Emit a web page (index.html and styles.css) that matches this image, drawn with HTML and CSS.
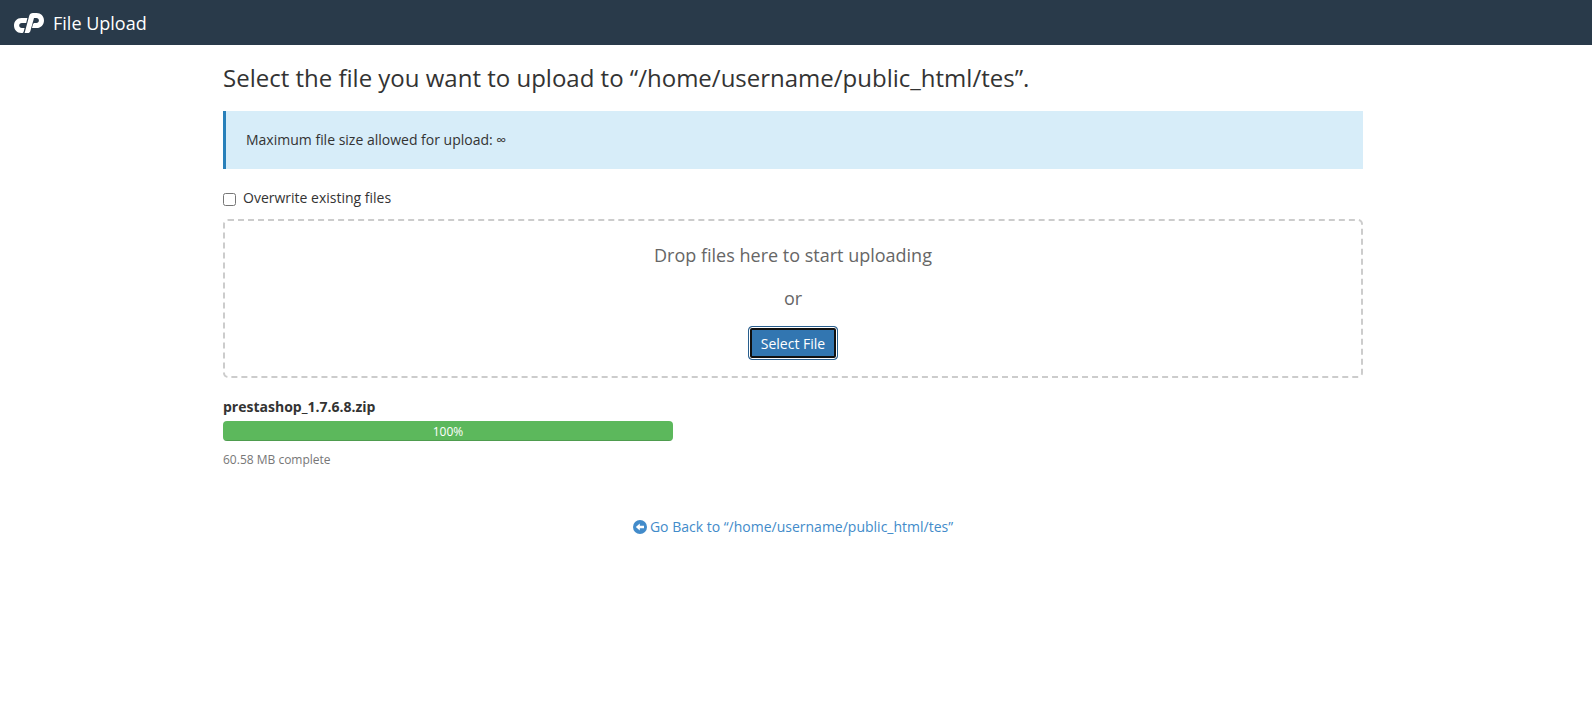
FILE: index.html
```html
<!DOCTYPE html>
<html lang="en">
<head>
    <meta charset="UTF-8">
    <meta name="viewport" content="width=device-width, initial-scale=1.0">
    <title>File Upload</title>
    <link rel="stylesheet" href="styles.css">
</head>
<body>
    <header class="navbar">
        <svg class="logo" viewBox="0 0 30 20" width="30" height="20" aria-hidden="true">
            <path d="M7.4 5H13.4L12.2 10H7.8C6.200 10 5.200 11.100 5.200 12.500C5.200 14 6.300 15 7.800 15H9L10.600 15L9.700 18.400C9.400 19.400 8.800 20 7.800 20H7.200C3 20 0 16.600 0 12.500C0 8.400 3 5 7.400 5Z"/>
            <path d="M10.600 20L15.100 3.200C15.600 1.200 17 0 19 0H22.600C26.800 0 30 3.200 30 7.400C30 11.700 26.800 15 22.600 15H18L18.800 11.800C19.100 10.600 19.800 10 20.800 10H22.400C23.900 10 24.900 8.900 24.900 7.500C24.900 6 23.900 5 22.400 5H20L16.300 18.200C15.900 19.400 15 20 13.900 20Z"/>
        </svg>
        <span class="navbar-title">File Upload</span>
    </header>
    <main class="container">
        <h1>Select the file you want to upload to “/home/username/public_html/tes”.</h1>

        <div class="callout">Maximum file size allowed for upload: ∞</div>

        <div class="overwrite">
            <input type="checkbox" id="overwrite">
            <label for="overwrite">Overwrite existing files</label>
        </div>

        <div class="drop-zone">
            <p>Drop files here to start uploading</p>
            <p>or</p>
            <button type="button" class="select-btn">Select File</button>
        </div>

        <div class="upload">
            <div class="upload-name">prestashop_1.7.6.8.zip</div>
            <div class="progress">
                <div class="progress-bar" style="width: 100%">100%</div>
            </div>
            <div class="upload-status">60.58 MB complete</div>
        </div>

        <div class="go-back">
            <a href="#">
                <svg viewBox="0 0 14 14" width="14" height="14" aria-hidden="true">
                    <circle cx="7" cy="7" r="7" fill="#428bca"/>
                    <path d="M2.800 7L6.800 3.500V5.800H11V8.200H6.800V10.500Z" fill="#fff"/>
                </svg>
                <span>Go Back to “/home/username/public_html/tes”</span>
            </a>
        </div>
    </main>
</body>
</html>
```
FILE: styles.css
```css
* {
    box-sizing: border-box;
}

body {
    margin: 0;
    font-family: "Open Sans", sans-serif;
    font-size: 14px;
    line-height: 20px;
    color: #333;
    background-color: #fff;
}

.navbar {
    display: flex;
    align-items: center;
    height: 45px;
    padding: 0 14px;
    background-color: #293a4a;
    color: #fff;
}

.logo {
    fill: #fff;
    margin-right: 9px;
}

.navbar-title {
    font-size: 18px;
}

.container {
    width: calc(100% - 36px);
    max-width: 1146px;
    margin: 0 auto;
    padding: 20px 6px 20px 0;
}

h1 {
    margin: 0 0 20px;
    font-size: 24px;
    font-weight: 400;
    line-height: 26px;
}

.callout {
    padding: 19px 20px;
    border-left: 3px solid #2880ba;
    background-color: #d7edf9;
}

.overwrite {
    display: flex;
    align-items: center;
    margin: 19px 0 11px;
}

.overwrite input {
    width: 13px;
    height: 13px;
    margin: 2px 7px 0 0;
}

.drop-zone {
    padding: 22px 20px 16px;
    border: 2px dashed #ccc;
    border-radius: 5px;
    text-align: center;
}

.drop-zone p {
    margin: 0 0 18px;
    font-size: 18px;
    line-height: 25px;
    color: #666;
}

.drop-zone p + p {
    margin-bottom: 15px;
}

.select-btn {
    display: block;
    height: 34px;
    margin: 0 auto;
    padding: 0 12px;
    border: 1px solid #285e8e;
    border-radius: 4px;
    background-color: #3276b1;
    box-shadow: inset 0 0 0 1px #fff, inset 0 0 0 3px #101010;
    font-family: inherit;
    font-size: 14px;
    color: #fff;
    cursor: pointer;
}

.upload {
    max-width: 450px;
    margin-top: 19px;
}

.upload-name {
    font-weight: 700;
    margin-bottom: 4px;
}

.progress {
    height: 20px;
    border-radius: 4px;
    background-color: #f5f5f5;
    overflow: hidden;
}

.progress-bar {
    height: 100%;
    background-color: #5cb85c;
    box-shadow: inset 0 -1px 0 rgba(0, 0, 0, 0.15);
    font-size: 12px;
    line-height: 22px;
    text-align: center;
    color: #fff;
}

.upload-status {
    margin-top: 9px;
    font-size: 12px;
    color: #777;
}

.go-back {
    margin-top: 47px;
    text-align: center;
}

.go-back a {
    display: inline-flex;
    align-items: center;
    gap: 3px;
    color: #428bca;
    text-decoration: none;
}

.go-back a:hover {
    text-decoration: underline;
}
```
